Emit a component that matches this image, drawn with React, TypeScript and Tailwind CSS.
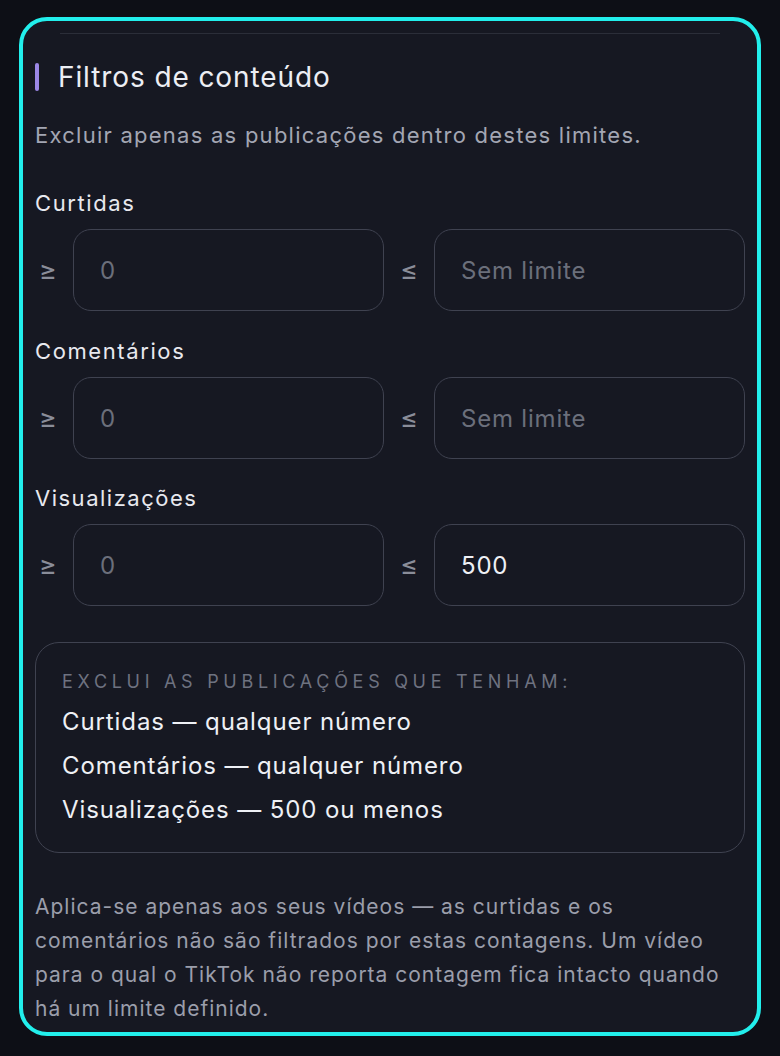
import React from "react";

const font = { fontFamily: "Inter, 'Noto Sans', sans-serif" };

function Row({ min, max, maxIsValue }: { min: string; max: string; maxIsValue?: boolean }) {
  return (
    <div className="grid grid-cols-[26px_1fr_26px_1fr] items-center gap-x-[12px]">
      <div className="text-center text-[27px] leading-none text-[#8a8d99]">≥</div>
      <div className="flex h-[82px] items-center rounded-[18px] border border-[#3f4250] bg-[#161822] pl-[26px] pt-[2px] text-[24px] tracking-[0.8px] text-[#6b6f7b]">
        {min}
      </div>
      <div className="text-center text-[27px] leading-none text-[#8a8d99]">≤</div>
      <div
        className={
          "flex h-[82px] items-center rounded-[18px] border border-[#3f4250] bg-[#161822] pl-[26px] pt-[2px] text-[24px] tracking-[0.8px] " +
          (maxIsValue ? "text-[#eef0f5]" : "text-[#6b6f7b]")
        }
      >
        {max}
      </div>
    </div>
  );
}

export default function App() {
  return (
    <div className="min-h-[1056px] w-full bg-[#0d0f16] pt-[17px] pb-[21px]" style={font}>
      <div className="mx-[19px] rounded-[28px] border-4 border-[#22efec] bg-[#161822] px-[12px] pb-[6px]">
        <div className="mx-[25px] mt-[12px] h-px bg-[#2b2e39]" />
        <div className="mt-[29px] flex items-center gap-[19px]">
          <div className="h-[28px] w-[4px] rounded-full bg-[#9b87e6]" />
          <div className="text-[28px] leading-[28px] tracking-[0.9px] text-[#eceef4]">Filtros de conteúdo</div>
        </div>
        <div className="mt-[29px] text-[22px] leading-[30px] tracking-[1.25px] text-[#a3a6b3]">
          Excluir apenas as publicações dentro destes limites.
        </div>

        <div className="mt-[38px] text-[22px] leading-[30px] tracking-[1.6px] text-[#e8e9ef]">Curtidas</div>
        <div className="mt-[11px]">
          <Row min="0" max="Sem limite" />
        </div>

        <div className="mt-[25px] text-[22px] leading-[30px] tracking-[1.6px] text-[#e8e9ef]">Comentários</div>
        <div className="mt-[11px]">
          <Row min="0" max="Sem limite" />
        </div>

        <div className="mt-[24px] text-[22px] leading-[30px] tracking-[1.5px] text-[#e8e9ef]">Visualizações</div>
        <div className="mt-[11px]">
          <Row min="0" max="500" maxIsValue />
        </div>

        <div className="mt-[36px] rounded-[24px] border border-[#3f4250] px-[26px] pt-[27px] pb-[20px]">
          <div className="text-[18px] leading-[24px] tracking-[4.7px] text-[#6e7280]">
            EXCLUI AS PUBLICAÇÕES QUE TENHAM:
          </div>
          <div className="mt-[6px] text-[24px] leading-[44px] tracking-[0.9px] text-[#eef0f5]">
            <div>Curtidas — qualquer número</div>
            <div>Comentários — qualquer número</div>
            <div>Visualizações — 500 ou menos</div>
          </div>
        </div>

        <div className="mt-[37px] whitespace-nowrap text-[21px] leading-[34px] tracking-[1px] text-[#9b9eab]">
          Aplica-se apenas aos seus vídeos — as curtidas e os
          <br />
          comentários não são filtrados por estas contagens. Um vídeo
          <br />
          para o qual o TikTok não reporta contagem fica intacto quando
          <br />
          há um limite definido.
        </div>
      </div>
    </div>
  );
}
